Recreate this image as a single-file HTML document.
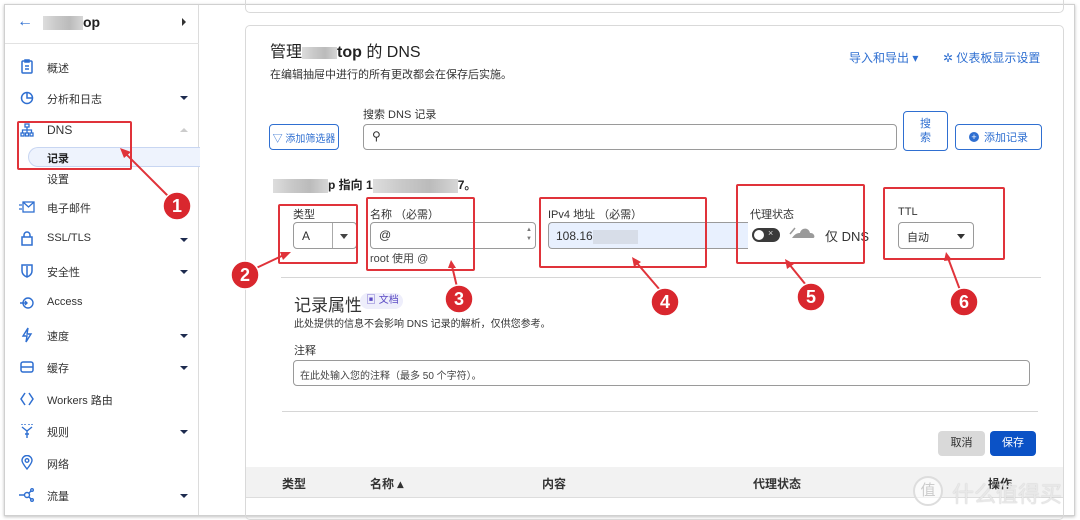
<!DOCTYPE html>
<html><head><meta charset="utf-8"><style>
*{box-sizing:border-box;margin:0;padding:0}
body{width:1080px;height:520px;background:#fff;font-family:"Liberation Sans","Noto Sans CJK SC",sans-serif;color:#313131;position:relative;overflow:hidden}
.a{position:absolute;white-space:nowrap}
.frame{position:absolute;left:4px;top:4px;width:1071px;height:512px;border:1px solid #d0d0d0;box-shadow:0 1px 3px rgba(0,0,0,.25)}
.side{position:absolute;left:5px;top:5px;width:194px;height:510px;border-right:1px solid #dcdcdc;background:#fff}
.item{position:absolute;left:47px;font-size:11px;color:#333}
.ic{position:absolute;left:20px;width:14px;height:14px;color:#2f6fd1}
.car{position:absolute;left:180px;width:0;height:0;border-left:4px solid transparent;border-right:4px solid transparent;border-top:4px solid #1d2b4f}
.card{position:absolute;left:245px;top:25px;width:819px;height:495px;border:1px solid #d9d9d9;border-radius:5px}
.inp{position:absolute;border:1px solid #9a9a9a;border-radius:4px;background:#fff}
.btn{position:absolute;border:1px solid #2f6fd1;border-radius:4px;color:#2f6fd1;font-size:11px;display:flex;align-items:center;justify-content:center}
.rb{position:absolute;border:2px solid #e0333a;border-radius:2px}
.lbl{position:absolute;font-size:11px;color:#333}
.blur{display:inline-block;background:linear-gradient(90deg,#ddd,#c9c9c9,#bbb,#d6d6d6);height:14px;vertical-align:middle}
</style></head><body>
<div class="frame"></div>
<div class="side">
 <div class="a" style="left:12px;top:8px;font-size:16px;color:#2f6fd1">←</div>
 <div class="a" style="left:38px;top:9px;font-size:14px;font-weight:bold;color:#222"><span class="blur" style="width:40px"></span>op</div>
 <div class="a" style="left:177px;top:13px;width:0;height:0;border-top:4px solid transparent;border-bottom:4px solid transparent;border-left:4px solid #333"></div>
 <div style="position:absolute;left:0;top:38px;width:194px;border-top:1px solid #e2e2e2"></div>
 <div style="position:absolute;left:23px;top:142px;width:172px;height:20px;background:#eef3fd;border:1px solid #c8d6f2;border-radius:10px 0 0 10px;border-right:none"></div>
</div>
<!-- sidebar items (absolute to body) -->
<svg class="a" style="left:20px;top:59px" width="14" height="16" viewBox="0 0 14 16" fill="none" stroke="#2f6fd1" stroke-width="1.5"><rect x="2" y="2" width="10" height="12" rx="1"/><path d="M5 1h4v2H5zM5 7h4M5 10h4"/></svg>
<div class="item" style="top:60px">概述</div>
<svg class="a" style="left:20px;top:91px" width="14" height="14" viewBox="0 0 14 14" fill="none" stroke="#2f6fd1" stroke-width="1.5"><circle cx="7" cy="7" r="5.5"/><path d="M7 1.5V7h5.5"/></svg>
<div class="item" style="top:91px">分析和日志</div><div class="car" style="top:96px"></div>
<svg class="a" style="left:20px;top:123px" width="14" height="14" viewBox="0 0 14 14" fill="none" stroke="#2f6fd1" stroke-width="1.3"><rect x="5" y="1" width="4" height="3"/><rect x="1" y="10" width="3" height="3"/><rect x="5.5" y="10" width="3" height="3"/><rect x="10" y="10" width="3" height="3"/><path d="M7 4v3M2.5 10V7h9v3M7 7v3"/></svg>
<div class="item" style="top:123px;font-size:12px">DNS</div>
<div class="a" style="left:180px;top:128px;border-left:4px solid transparent;border-right:4px solid transparent;border-bottom:4px solid #ccc"></div>
<div class="item" style="top:150px;font-weight:bold;color:#222">记录</div>
<div class="item" style="top:171px">设置</div>
<svg class="a" style="left:19px;top:201px" width="16" height="12" viewBox="0 0 16 12" fill="none" stroke="#2f6fd1" stroke-width="1.3"><rect x="4" y="1" width="11" height="10"/><path d="M4 1l5.5 5L15 1M0 4h3M0 8h3"/></svg>
<div class="item" style="top:200px">电子邮件</div>
<svg class="a" style="left:21px;top:231px" width="12" height="15" viewBox="0 0 12 15" fill="none" stroke="#2f6fd1" stroke-width="1.5"><rect x="1" y="6" width="10" height="8"/><path d="M3 6V4a3 3 0 016 0v2"/></svg>
<div class="item" style="top:232px">SSL/TLS</div><div class="car" style="top:238px"></div>
<svg class="a" style="left:21px;top:264px" width="12" height="14" viewBox="0 0 12 14" fill="none" stroke="#2f6fd1" stroke-width="1.5"><path d="M1 1h10v6c0 3-2.5 5-5 6-2.5-1-5-3-5-6z M6 2v10"/></svg>
<div class="item" style="top:264px">安全性</div><div class="car" style="top:270px"></div>
<svg class="a" style="left:19px;top:296px" width="16" height="14" viewBox="0 0 16 14" fill="none" stroke="#2f6fd1" stroke-width="1.4"><circle cx="9" cy="7" r="5"/><path d="M1 7h7M6 5l2 2-2 2"/></svg>
<div class="item" style="top:296px">Access</div>
<svg class="a" style="left:21px;top:327px" width="12" height="16" viewBox="0 0 12 16" fill="none" stroke="#2f6fd1" stroke-width="1.4"><path d="M7 1L2 9h4l-1 6 5-8H6z"/></svg>
<div class="item" style="top:328px">速度</div><div class="car" style="top:334px"></div>
<svg class="a" style="left:20px;top:360px" width="14" height="14" viewBox="0 0 14 14" fill="none" stroke="#2f6fd1" stroke-width="1.5"><rect x="1" y="2" width="12" height="10" rx="2"/><path d="M1 7h12"/></svg>
<div class="item" style="top:360px">缓存</div><div class="car" style="top:366px"></div>
<svg class="a" style="left:20px;top:392px" width="14" height="14" viewBox="0 0 14 14" fill="none" stroke="#2f6fd1" stroke-width="1.5"><path d="M5 1L1 7l4 6M9 1l4 6-4 6"/></svg>
<div class="item" style="top:392px">Workers 路由</div>
<svg class="a" style="left:21px;top:423px" width="12" height="16" viewBox="0 0 12 16" fill="none" stroke="#2f6fd1" stroke-width="1.4"><path d="M1 1v1M4 1v1M8 1v1M11 1v1M1 4l5 4 5-4M6 8v7M4 11h4"/></svg>
<div class="item" style="top:424px">规则</div><div class="car" style="top:430px"></div>
<svg class="a" style="left:21px;top:455px" width="12" height="15" viewBox="0 0 12 15" fill="none" stroke="#2f6fd1" stroke-width="1.4"><path d="M6 14C2 9 1 7 1 5.5a5 5 0 0110 0C11 7 10 9 6 14z"/><circle cx="6" cy="5.5" r="1.8"/></svg>
<div class="item" style="top:456px">网络</div>
<svg class="a" style="left:19px;top:488px" width="16" height="14" viewBox="0 0 16 14" fill="none" stroke="#2f6fd1" stroke-width="1.4"><circle cx="8" cy="7" r="2.5"/><circle cx="13" cy="2" r="1.3"/><circle cx="13" cy="12" r="1.3"/><path d="M0 7h5.5M10 5l2-2M10 9l2 2"/></svg>
<div class="item" style="top:488px">流量</div><div class="car" style="top:494px"></div>

<!-- main -->
<div style="position:absolute;left:245px;top:0;width:819px;height:13px;border:1px solid #d9d9d9;border-top:none;border-radius:0 0 5px 5px"></div>
<div class="card"></div>
<div class="a" style="left:270px;top:38px;font-size:16px;color:#222">管理<span class="blur" style="width:35px;height:12px"></span><b>top</b> 的 DNS</div>
<div class="a" style="left:270px;top:66px;font-size:11px;color:#333">在编辑抽屉中进行的所有更改都会在保存后实施。</div>
<div class="a" style="left:849px;top:49px;font-size:12px;color:#2f6fd1">导入和导出 ▾</div>
<div class="a" style="left:943px;top:49px;font-size:12px;color:#2f6fd1">✲ 仪表板显示设置</div>
<div class="lbl" style="left:363px;top:106px">搜索 DNS 记录</div>
<div class="btn" style="left:269px;top:124px;width:70px;height:26px;font-size:10px">▽ 添加筛选器</div>
<div class="inp" style="left:363px;top:124px;width:534px;height:26px"><span style="position:absolute;left:8px;top:4px;font-size:12px;color:#333">⚲</span></div>
<div class="btn" style="left:903px;top:111px;width:45px;height:40px;line-height:14px;text-align:center">搜<br>索</div>
<div class="btn" style="left:955px;top:124px;width:87px;height:26px"><span style="display:inline-block;width:10px;height:10px;border-radius:50%;background:#2f6fd1;color:#fff;font-size:9px;line-height:10px;text-align:center;margin-right:5px">+</span>添加记录</div>

<div class="a" style="left:273px;top:176px;font-size:12px;font-weight:bold;color:#222"><span class="blur" style="width:55px"></span>p 指向 1<span class="blur" style="width:85px"></span>7。</div>
<div class="lbl" style="left:293px;top:206px">类型</div>
<div class="inp" style="left:293px;top:222px;width:64px;height:27px"><span style="position:absolute;left:8px;top:6px;font-size:12px">A</span><span style="position:absolute;left:38px;top:0;height:25px;border-left:1px solid #aaa"></span><span style="position:absolute;left:46px;top:11px;border-left:4px solid transparent;border-right:4px solid transparent;border-top:5px solid #444"></span></div>
<div class="lbl" style="left:370px;top:206px">名称 （必需）</div>
<div class="inp" style="left:370px;top:222px;width:166px;height:27px"><span style="position:absolute;left:8px;top:5px;font-size:12px">@</span><span style="position:absolute;right:3px;top:3px;font-size:6px;color:#777;line-height:9px">▲<br>▼</span></div>
<div class="lbl" style="left:370px;top:250px;color:#444">root 使用 @</div>
<div class="lbl" style="left:548px;top:206px">IPv4 地址 （必需）</div>
<div class="inp" style="left:548px;top:222px;width:200px;height:27px;background:#e8f0fe;border-right:none;border-radius:4px 0 0 4px"><span style="position:absolute;left:7px;top:6px;font-size:12px">108.16<span class="blur" style="width:45px;background:#d7dde8"></span></span></div>
<div class="lbl" style="left:750px;top:206px">代理状态</div>
<div class="a" style="left:752px;top:228px;width:28px;height:14px;border-radius:7px;background:#3a3a3a"><span style="position:absolute;left:2px;top:2px;width:10px;height:10px;border-radius:50%;background:#fff"></span><span style="position:absolute;left:16px;top:0;font-size:9px;color:#ddd">×</span></div>
<svg class="a" style="left:789px;top:224px" width="26" height="16" viewBox="0 0 26 16"><path d="M3 14h21c1 0 2-1 1-3-1-2-3-2-4-2-1-4-4-5-7-4-2 1-3 3-3 4-3 0-5 1-8 5z" fill="#9a9a9a"/><path d="M1 10l5-6" stroke="#9a9a9a" stroke-width="1.5"/></svg>
<div class="a" style="left:825px;top:226px;font-size:13px;color:#333">仅 DNS</div>
<div class="lbl" style="left:898px;top:206px">TTL</div>
<div class="inp" style="left:898px;top:222px;width:76px;height:27px"><span style="position:absolute;left:8px;top:6px;font-size:11px">自动</span><span style="position:absolute;left:58px;top:11px;border-left:4px solid transparent;border-right:4px solid transparent;border-top:5px solid #333"></span></div>
<div style="position:absolute;left:281px;top:277px;width:760px;border-top:1px solid #d6d6d6"></div>
<div class="a" style="left:294px;top:291px;font-size:17px;color:#333">记录属性</div>
<div class="a" style="left:360px;top:293px;width:43px;height:16px;background:#eeeefb;border-radius:8px;font-size:10px;color:#5b4bc4;line-height:16px;padding-left:6px">▣ 文档</div>
<div class="a" style="left:294px;top:315px;font-size:10px;color:#333">此处提供的信息不会影响 DNS 记录的解析，仅供您参考。</div>
<div class="lbl" style="left:294px;top:342px">注释</div>
<div class="inp" style="left:293px;top:360px;width:737px;height:26px"><span style="position:absolute;left:6px;top:6px;font-size:10px;color:#444">在此处输入您的注释（最多 50 个字符）。</span></div>
<div style="position:absolute;left:282px;top:411px;width:756px;border-top:1px solid #d6d6d6"></div>
<div class="a" style="left:938px;top:431px;width:47px;height:25px;background:#d9d9d9;border-radius:4px;font-size:11px;text-align:center;line-height:25px">取消</div>
<div class="a" style="left:990px;top:431px;width:46px;height:25px;background:#0b52c6;border-radius:4px;font-size:11px;color:#fff;text-align:center;line-height:25px">保存</div>
<div class="a" style="left:246px;top:467px;width:817px;height:31px;background:#f2f2f2;border-bottom:1px solid #ddd"></div>
<div class="a" style="left:282px;top:475px;font-size:12px;font-weight:bold;color:#333">类型</div>
<div class="a" style="left:370px;top:475px;font-size:12px;font-weight:bold;color:#333">名称 ▴</div>
<div class="a" style="left:542px;top:475px;font-size:12px;font-weight:bold;color:#333">内容</div>
<div class="a" style="left:753px;top:475px;font-size:12px;font-weight:bold;color:#333">代理状态</div>
<div class="a" style="left:988px;top:475px;font-size:12px;font-weight:bold;color:#333">操作</div>
<div class="a" style="left:913px;top:476px;width:30px;height:30px;border:2px solid #ddd;border-radius:50%;background:rgba(255,255,255,.6);font-size:15px;color:#ccc;text-align:center;line-height:26px">值</div>
<div class="a" style="left:952px;top:477px;font-size:22px;color:#e8e8e8;text-shadow:0 0 1px #bbb">什么值得买</div>

<!-- annotations -->
<div class="rb" style="left:17px;top:121px;width:115px;height:49px"></div>
<div class="rb" style="left:278px;top:204px;width:80px;height:60px"></div>
<div class="rb" style="left:366px;top:197px;width:109px;height:74px"></div>
<div class="rb" style="left:539px;top:197px;width:168px;height:71px"></div>
<div class="rb" style="left:736px;top:184px;width:129px;height:80px"></div>
<div class="rb" style="left:883px;top:187px;width:122px;height:73px"></div>
<svg class="a" style="left:0;top:0" width="1080" height="520">
<g stroke="#e0333a" stroke-width="2" fill="#e0333a">
<line x1="170" y1="198" x2="125" y2="153"/><polygon points="120,148 131,152 124,158" stroke="none"/>
<line x1="252" y1="270" x2="286" y2="254"/><polygon points="291,252 283,260 280,252" stroke="none"/>
<line x1="457" y1="287" x2="452" y2="266"/><polygon points="451,260 456,268 448,268" stroke="none"/>
<line x1="660" y1="290" x2="636" y2="262"/><polygon points="632,257 641,262 634,267" stroke="none"/>
<line x1="806" y1="285" x2="789" y2="264"/><polygon points="785,259 794,264 787,269" stroke="none"/>
<line x1="960" y1="290" x2="948" y2="258"/><polygon points="946,252 952,260 944,261" stroke="none"/>
</g>
<g fill="#d9272e" stroke="#fff" stroke-width="1.5">
<circle cx="177" cy="206" r="14"/><circle cx="245" cy="275" r="14"/><circle cx="459" cy="299" r="14"/><circle cx="665" cy="302" r="14"/><circle cx="811" cy="297" r="14"/><circle cx="964" cy="302" r="14"/>
</g>
<g fill="#fff" font-family="Liberation Sans" font-weight="bold" font-size="18" text-anchor="middle">
<text x="177" y="212">1</text><text x="245" y="281">2</text><text x="459" y="305">3</text><text x="665" y="308">4</text><text x="811" y="303">5</text><text x="964" y="308">6</text>
</g>
</svg>
</body></html>
